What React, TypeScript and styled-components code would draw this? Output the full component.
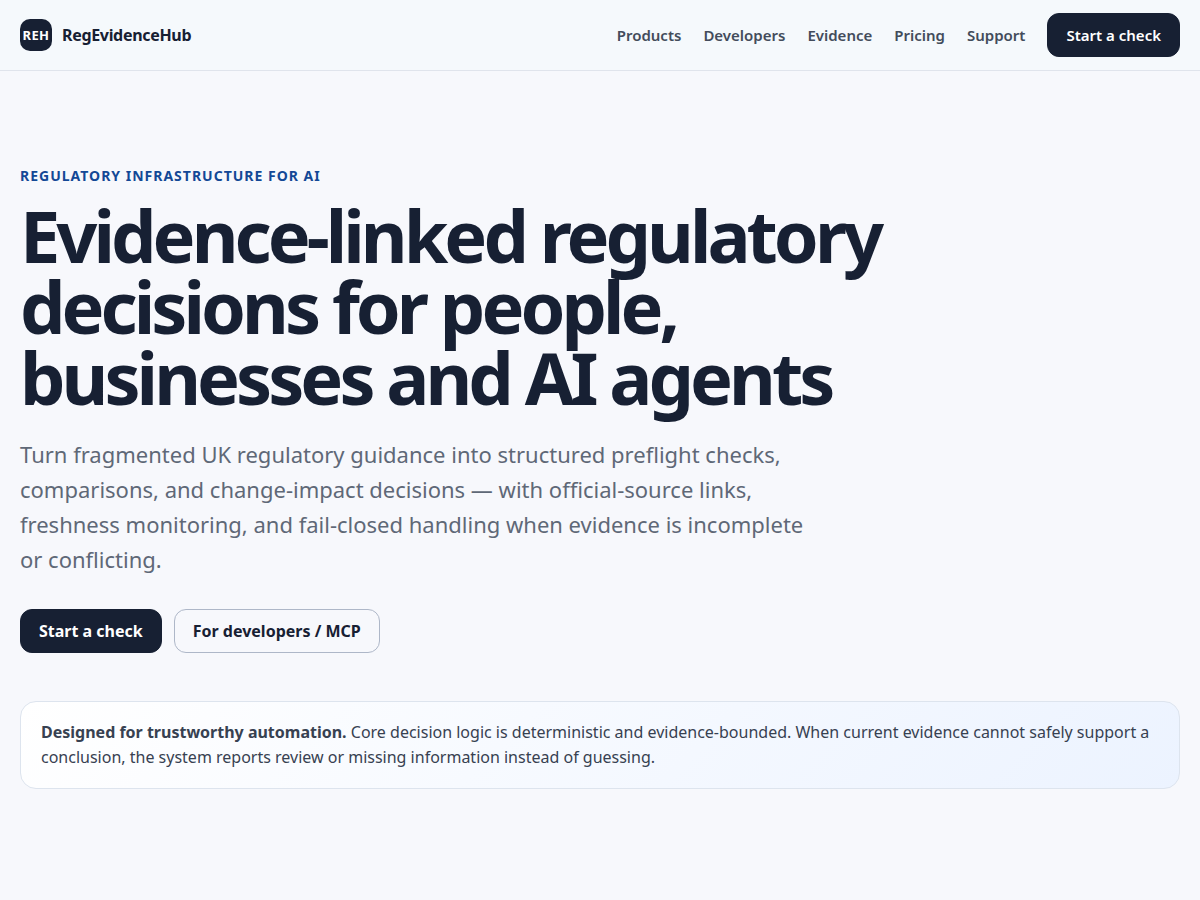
import React from "react";
import styled, { createGlobalStyle, css } from "styled-components";

const Global = createGlobalStyle`
  *, *::before, *::after { box-sizing: border-box; }
  body {
    margin: 0;
    background: #f7f8fc;
    color: #172033;
    font-family: "Noto Sans", sans-serif;
    font-size: 16px;
    line-height: 25px;
  }
  a { color: inherit; text-decoration: none; }
`;

const Header = styled.header`
  background: #f5f9fc;
  border-bottom: 1px solid #e0e4ec;
`;

const Container = styled.div`
  width: 100%;
  max-width: 1200px;
  margin: 0 auto;
  padding: 0 20px;
`;

const Bar = styled(Container)`
  min-height: 70px;
  display: flex;
  align-items: center;
  justify-content: space-between;
  gap: 24px;
`;

const Brand = styled.a`
  display: flex;
  align-items: center;
  gap: 10px;
  font-weight: 700;
  letter-spacing: -0.02em;
`;

const BrandMark = styled.span`
  width: 32px;
  height: 32px;
  display: grid;
  place-items: center;
  border-radius: 10px;
  background: #172033;
  color: #fff;
  font-size: 13px;
  font-weight: 700;
  letter-spacing: 0.03em;
`;

const Nav = styled.nav`
  display: flex;
  align-items: center;
  gap: 22px;
  font-size: 15px;
  font-weight: 600;
  color: #434c5b;
`;

const NavLink = styled.a``;

const ButtonLink = styled.a<{ $outline?: boolean }>`
  display: inline-flex;
  align-items: center;
  justify-content: center;
  min-height: 44px;
  padding: 0 18px;
  border: 1px solid #172033;
  border-radius: 12px;
  background: #172033;
  color: #fff;
  ${(p) =>
    p.$outline &&
    css`
      border-color: #aeb7c8;
      background: transparent;
      color: #172033;
    `}
`;

const Hero = styled(Container)`
  padding-top: 92px;
  padding-bottom: 110px;
`;

const Eyebrow = styled.p`
  margin: 0;
  color: #134896;
  font-size: 14px;
  font-weight: 700;
  letter-spacing: 1px;
  text-transform: uppercase;
`;

const Title = styled.h1`
  max-width: 900px;
  margin: 12px 0 24px;
  font-size: 72px;
  font-weight: 700;
  line-height: 71px;
  letter-spacing: -0.055em;
`;

const Lead = styled.p`
  max-width: 800px;
  margin: 0;
  color: #5f6877;
  font-size: 22px;
  line-height: 35px;
`;

const Actions = styled.div`
  display: flex;
  flex-wrap: wrap;
  gap: 12px;
  margin-top: 32px;
  font-weight: 700;
`;

const Notice = styled.aside`
  margin-top: 48px;
  padding: 18px 20px;
  border: 1px solid #dde4ee;
  border-radius: 16px;
  background: linear-gradient(135deg, #ffffff, #ecf3ff);
  color: #374151;
`;

const links = ["Products", "Developers", "Evidence", "Pricing", "Support"];

export default function App() {
  return (
    <>
      <Global />
      <Header>
        <Bar>
          <Brand href="#">
            <BrandMark>REH</BrandMark>
            RegEvidenceHub
          </Brand>
          <Nav aria-label="Main">
            {links.map((label) => (
              <NavLink key={label} href={`#${label.toLowerCase()}`}>
                {label}
              </NavLink>
            ))}
            <ButtonLink href="#start">Start a check</ButtonLink>
          </Nav>
        </Bar>
      </Header>
      <main>
        <Hero>
          <Eyebrow>Regulatory infrastructure for AI</Eyebrow>
          <Title>Evidence-linked regulatory decisions for people, businesses and AI agents</Title>
          <Lead>
            Turn fragmented UK regulatory guidance into structured preflight checks, comparisons, and
            change-impact decisions — with official-source links, freshness monitoring, and fail-closed
            handling when evidence is incomplete or conflicting.
          </Lead>
          <Actions>
            <ButtonLink href="#start">Start a check</ButtonLink>
            <ButtonLink href="#developers" $outline>
              For developers / MCP
            </ButtonLink>
          </Actions>
          <Notice>
            <strong>Designed for trustworthy automation.</strong> Core decision logic is deterministic and
            evidence-bounded. When current evidence cannot safely support a conclusion, the system reports
            review or missing information instead of guessing.
          </Notice>
        </Hero>
      </main>
    </>
  );
}
